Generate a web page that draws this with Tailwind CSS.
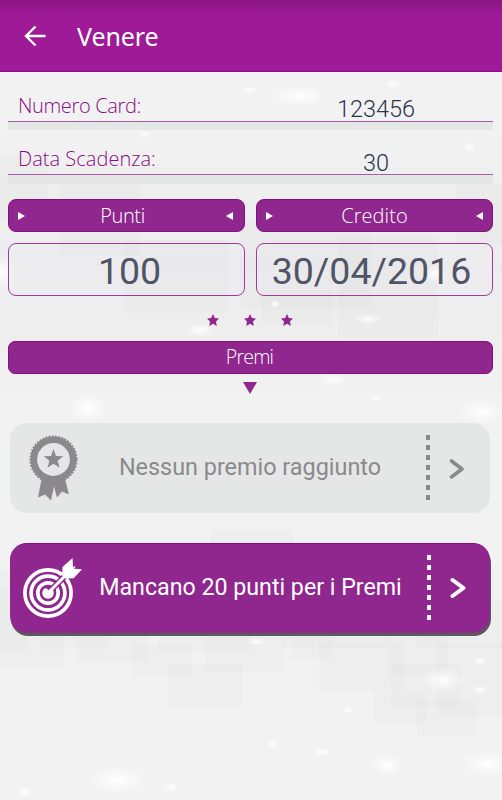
<!DOCTYPE html>
<html lang="it">
  <head>
    <meta charset="UTF-8" />
    <title>Venere</title>
    <meta name="viewport" content="width=device-width, initial-scale=1.0" />
    <script src="https://cdn.jsdelivr.net/npm/@tailwindcss/browser@4"></script>
  </head>
  <body class="relative h-[800px] overflow-hidden bg-[#f2f2f2] font-['Roboto',sans-serif]">
    <!-- Background pattern -->
    <svg class="absolute inset-0 -z-0" width="502" height="800" viewBox="0 0 502 800">
      <defs>
        <radialGradient id="glow">
          <stop offset="0" stop-color="#fff" />
          <stop offset="0.3" stop-color="#fff" stop-opacity="0.6" />
          <stop offset="1" stop-color="#fff" stop-opacity="0" />
        </radialGradient>
        <linearGradient id="shade" x1="0" y1="0" x2="0" y2="1">
          <stop offset="0" stop-color="#eae8eb" stop-opacity="0" />
          <stop offset="0.5" stop-color="#eae8eb" stop-opacity="0.7" />
          <stop offset="1" stop-color="#eae8eb" stop-opacity="0" />
        </linearGradient>
      </defs>
      <rect y="130" width="502" height="270" fill="url(#shade)" />
      <g fill="#dcd9dc" fill-opacity="0.17">
        <rect x="-10" y="155" width="58" height="65" rx="5" />
        <rect x="60" y="176" width="80" height="80" rx="4" />
        <rect x="124" y="240" width="104" height="73" rx="4" />
        <rect x="240" y="220" width="130" height="89" rx="4" />
        <rect x="262" y="290" width="70" height="35" rx="3" />
        <rect x="338" y="235" width="100" height="103" rx="4" />
        <rect x="456" y="183" width="60" height="60" rx="4" />
        <rect x="210" y="529" width="84" height="60" rx="4" />
        <rect x="-10" y="590" width="74" height="78" rx="8" />
        <rect x="-10" y="570" width="37" height="81" rx="4" />
        <rect x="76" y="590" width="71" height="72" rx="3" />
        <rect x="41" y="600" width="69" height="49" rx="4" />
        <rect x="132" y="643" width="59" height="34" rx="3" />
        <rect x="158" y="600" width="92" height="51" rx="3" />
        <rect x="169" y="664" width="73" height="43" rx="3" />
        <rect x="205" y="600" width="80" height="72" rx="3" />
        <rect x="291" y="600" width="41" height="59" rx="3" />
        <rect x="319" y="641" width="86" height="50" rx="3" />
        <rect x="283" y="620" width="105" height="28" rx="3" />
        <rect x="387" y="610" width="60" height="64" rx="3" />
        <rect x="391" y="664" width="71" height="43" rx="3" />
        <rect x="373" y="692" width="53" height="30" rx="3" />
        <rect x="417" y="700" width="60" height="36" rx="3" />
        <rect x="437" y="642" width="75" height="74" rx="4" />
        <rect x="417" y="600" width="90" height="48" rx="3" />
      </g>
      <g fill="url(#glow)">
        <ellipse cx="299" cy="96" rx="30" ry="12" />
        <ellipse cx="250" cy="90" rx="8" ry="4" />
        <ellipse cx="145" cy="134" rx="6" ry="4" />
        <ellipse cx="393" cy="84" rx="8" ry="5" />
        <ellipse cx="470" cy="147" rx="6" ry="5" />
        <ellipse cx="2" cy="273" rx="16" ry="20" />
        <ellipse cx="200" cy="330" rx="14" ry="7" />
        <ellipse cx="275" cy="304" rx="6" ry="4" />
        <ellipse cx="333" cy="380" rx="14" ry="7" />
        <ellipse cx="376" cy="398" rx="8" ry="5" />
        <ellipse cx="435" cy="274" rx="12" ry="10" />
        <ellipse cx="368" cy="319" rx="14" ry="6" />
        <ellipse cx="88" cy="408" rx="22" ry="14" />
        <ellipse cx="482" cy="412" rx="24" ry="14" />
        <ellipse cx="256" cy="642" rx="9" ry="4" />
        <ellipse cx="443" cy="680" rx="22" ry="13" />
        <ellipse cx="480" cy="690" rx="8" ry="5" />
        <ellipse cx="480" cy="661" rx="8" ry="4" />
        <ellipse cx="348" cy="710" rx="6" ry="4" />
        <ellipse cx="273" cy="744" rx="6" ry="6" />
        <ellipse cx="322" cy="752" rx="10" ry="5" />
        <ellipse cx="387" cy="765" rx="17" ry="11" />
        <ellipse cx="487" cy="764" rx="28" ry="14" />
        <ellipse cx="118" cy="780" rx="32" ry="15" />
        <ellipse cx="171" cy="787" rx="9" ry="5" />
        <ellipse cx="25" cy="792" rx="8" ry="6" />
      </g>
    </svg>

    <div class="relative">
      <!-- Header -->
      <header class="flex h-[72px] items-center border-b border-[#8b0f86] bg-[#9e1a96] bg-linear-to-b from-[#8a1683] to-[#9e1a96] to-20% pl-6 text-white">
        <svg class="mt-px h-[22px] w-[22px]" viewBox="0 0 22 22" fill="none" stroke="currentColor" stroke-width="2.4">
          <path d="M21.5 11H2M11.5 1.5L2 11l9.5 9.5" />
        </svg>
        <h1 class="ml-[31px] font-['Noto_Sans',sans-serif] text-[25px] leading-8 tracking-[-0.1px]">Venere</h1>
      </header>

      <main class="px-2">
        <!-- Card details -->
        <dl class="mr-px">
          <div class="flex h-[58px] items-end border-b-8 border-[#e5e7e7]">
            <div class="flex h-[50px] w-full border-b border-[#ad5aa9]">
              <dt class="w-[251px] pl-2.5 pt-[19px] font-['Open_Sans',sans-serif] text-[20px] font-light leading-[30px] tracking-[-0.35px] text-[#850f80]">Numero Card:</dt>
              <dd class="flex-1 pt-[22px] text-center text-[23.5px] font-light leading-[30px] text-[#2c344e]">123456</dd>
            </div>
          </div>
          <div class="flex h-[54px] items-end border-b-[9px] border-[#e5e7e7]">
            <div class="flex h-[45px] w-full border-b border-[#ad5aa9]">
              <dt class="w-[251px] pl-2.5 pt-[14px] font-['Open_Sans',sans-serif] text-[20px] font-light leading-[30px] tracking-[0.03px] text-[#850f80]">Data Scadenza:</dt>
              <dd class="flex-1 pt-[18px] text-center text-[23.5px] font-light leading-[30px] text-[#2c344e]">30</dd>
            </div>
          </div>
        </dl>

        <!-- Points and credit -->
        <div class="mr-px mt-[15px] grid grid-cols-2 gap-x-[11px] gap-y-[11px] text-center">
          <h2 class="flex h-[33px] items-center justify-between rounded-lg border border-[#850f80] bg-[#90278e] px-[9px] font-['Open_Sans',sans-serif] text-[20px] font-light tracking-[-0.4px] text-white">
            <svg class="h-2 w-[7px]" viewBox="0 0 7 8" fill="currentColor"><path d="M0 0l7 4-7 4z" /></svg>
            <span class="pr-1.5">Punti</span>
            <svg class="mr-0.5 h-2 w-[7px]" viewBox="0 0 7 8" fill="currentColor"><path d="M7 0L0 4l7 4z" /></svg>
          </h2>
          <h2 class="flex h-[33px] items-center justify-between rounded-lg border border-[#850f80] bg-[#90278e] px-[9px] font-['Open_Sans',sans-serif] text-[20px] font-light tracking-[0.1px] text-white">
            <svg class="h-2 w-[7px]" viewBox="0 0 7 8" fill="currentColor"><path d="M0 0l7 4-7 4z" /></svg>
            Credito
            <svg class="h-2 w-[7px]" viewBox="0 0 7 8" fill="currentColor"><path d="M7 0L0 4l7 4z" /></svg>
          </h2>
          <p class="h-[53px] rounded-lg border border-[#a03b9d] pl-1.5 text-[37.5px] leading-[54px] text-[#4f5566]">100</p>
          <p class="h-[53px] rounded-lg border border-[#a03b9d] pr-1.5 text-[37.5px] leading-[54px] text-[#4f5566]">30/04/2016</p>
        </div>

        <!-- Stars -->
        <div class="mt-[18px] flex justify-center gap-[25px] pr-0.5 text-[#90278e]">
          <svg class="h-3 w-3" viewBox="0 0 24 24" fill="currentColor"><path d="M12 0l3.700 8 8.300 1-6 6 1.500 9L12 19.500 4.500 24 6 15 0 9l8.300-1z" /></svg>
          <svg class="h-3 w-3" viewBox="0 0 24 24" fill="currentColor"><path d="M12 0l3.700 8 8.300 1-6 6 1.500 9L12 19.500 4.500 24 6 15 0 9l8.300-1z" /></svg>
          <svg class="h-3 w-3" viewBox="0 0 24 24" fill="currentColor"><path d="M12 0l3.700 8 8.300 1-6 6 1.500 9L12 19.500 4.500 24 6 15 0 9l8.300-1z" /></svg>
        </div>

        <!-- Prizes -->
        <h2 class="mr-px mt-[15px] h-[33px] rounded-[7px] border border-[#850f80] bg-[#90278e] pr-0.5 text-center font-['Open_Sans',sans-serif] text-[19.5px] font-light leading-[30px] tracking-[-0.8px] text-white">Premi</h2>
        <svg class="ml-[235px] mt-2 h-3 w-[14px] text-[#90278e]" viewBox="0 0 14 12" fill="currentColor"><path d="M0 0h14L7 12z" /></svg>

        <div class="ml-0.5 mt-[29px] flex h-[90px] w-[480px] items-center rounded-[17px] bg-[#e5e7e7] text-[#8b898b]">
          <svg class="ml-[19px] h-[66px] w-[50px]" viewBox="29 435.5 50 66">
            <path fill="currentColor" d="M42 477l-4 21 7-3 6 6 3-14 3 11 5-6 7 3-5-19z" />
            <circle cx="53.500" cy="460" r="19.700" fill="none" stroke="currentColor" stroke-width="6.600" />
            <circle cx="53.500" cy="460" r="23.200" fill="none" stroke="currentColor" stroke-width="1.800" stroke-dasharray="1.900 1.340" />
            <path fill="currentColor" d="M53.500 449.500l2.500 7 7.300.2-5.700 4.500 2 7.100-6.100-4.100-6.100 4.100 2-7.100-5.700-4.500 7.300-.2z" />
          </svg>
          <p class="flex-1 pb-[3px] pr-[5px] text-center text-[23.4px] leading-8">Nessun premio raggiunto</p>
          <svg class="mb-px h-[66px] w-1" viewBox="0 0 4 66" fill="none" stroke="currentColor" stroke-width="4"><path d="M2 0v66" stroke-dasharray="5 5" /></svg>
          <svg class="ml-[19px] mr-6 h-[22px] w-[17px]" viewBox="0 0 17 22" fill="none" stroke="currentColor" stroke-width="3.6" stroke-linecap="round" stroke-linejoin="round"><path d="M2.500 4L13 12 2.500 20" /></svg>
        </div>

        <div class="ml-0.5 mt-[30px] flex h-[90px] w-[480px] items-center rounded-[17px] border-t border-[#850f80] bg-[#90278e] text-white shadow-[1px_3px_0_#5a5a5a]">
          <svg class="ml-[12px] h-[64px] w-[62px]" viewBox="22 552 62 64">
            <g fill="none" stroke="currentColor" stroke-width="3.700">
              <circle cx="48" cy="588" r="23.100" />
              <circle cx="48" cy="588" r="16.900" />
              <circle cx="48" cy="588" r="10.200" />
            </g>
            <path stroke="#90278e" stroke-width="6" d="M50 586l18-18" />
            <path fill="currentColor" d="M48 586c2-4 6-2 5.700 2a5.700 5.700 0 1 1-9.700-4c2-1.500 4-.5 4 2z" />
            <path stroke="currentColor" stroke-width="3" d="M50 586l18-18" />
            <path fill="currentColor" d="M72.500 553l-10 9-.3 8.500 3 3 8.500-.3 8.300-9-8-.5 2-2.700-3 1z" />
          </svg>
          <p class="flex-1 pb-[3px] pr-[10px] text-center text-[23.2px] leading-8">Mancano 20 punti per i Premi</p>
          <svg class="mb-0.5 h-[66px] w-1" viewBox="0 0 4 66" fill="none" stroke="currentColor" stroke-width="4"><path d="M2 0v66" stroke-dasharray="5 5" /></svg>
          <svg class="mb-1 ml-[19px] mr-[23px] h-[22px] w-[17px]" viewBox="0 0 17 22" fill="none" stroke="currentColor" stroke-width="4" stroke-linecap="round" stroke-linejoin="round"><path d="M2.500 4L13.500 12 2.500 20" /></svg>
        </div>
      </main>
    </div>
  </body>
</html>
